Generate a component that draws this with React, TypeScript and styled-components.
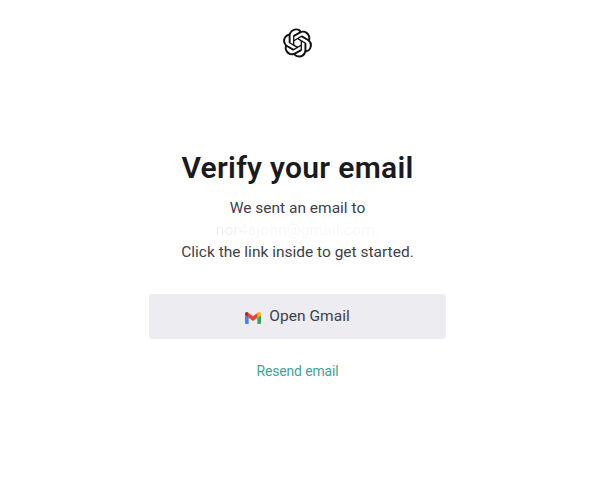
import React from "react";
import styled, { createGlobalStyle } from "styled-components";
import { SiOpenai } from "react-icons/si";

const GlobalStyle = createGlobalStyle`
  body { margin: 0; background: #fff; font-family: Roboto, "Liberation Sans", sans-serif; }
`;

const Page = styled.main`
  box-sizing: border-box;
  width: 595px;
  height: 496px;
  padding-top: 28px;
  display: flex;
  flex-direction: column;
  align-items: center;
`;

const Logo = styled(SiOpenai)`
  display: block;
  width: 29px;
  height: 30px;
  color: #111;
`;

const Title = styled.h1`
  margin: 90px 0 0;
  font-size: 30px;
  line-height: 40px;
  font-weight: 600;
  letter-spacing: 0.3px;
  color: #1b1b1f;
  white-space: nowrap;
`;

const Message = styled.div`
  margin-top: 9px;
  display: flex;
  flex-direction: column;
  align-items: center;
  font-size: 15.5px;
  line-height: 22px;
  color: #3f4149;
  white-space: nowrap;
`;

const Line = styled.span<{ $spacing: number }>`
  letter-spacing: ${(p) => p.$spacing}px;
`;

const Address = styled(Line)`
  color: transparent;
  background: linear-gradient(90deg, #ededf0 0, #f2f2f4 22px, #f8f8f9 26px, #f8f8f9 100%);
  background-clip: text;
  -webkit-background-clip: text;
`;

const MailButton = styled.button`
  margin: 31px 0 0;
  padding: 0;
  width: 297px;
  height: 45px;
  border: 0;
  border-radius: 3px;
  background: #ececf1;
  color: #3f4149;
  display: flex;
  align-items: center;
  justify-content: center;
  gap: 8px;
  font: 400 15.5px/22px Roboto, "Liberation Sans", sans-serif;
  letter-spacing: 0.05px;
`;

const ButtonLabel = styled.span`
  padding-bottom: 1px;
`;

const MailMark = styled.svg`
  display: block;
  width: 16px;
  height: 12px;
  margin-top: 3px;
`;

const Resend = styled.a`
  margin-top: 22px;
  font-size: 14px;
  line-height: 21px;
  letter-spacing: -0.15px;
  color: #4a9f93;
`;

function GmailIcon() {
  return (
    <MailMark viewBox="52 42 88 66" aria-hidden="true">
      <path fill="#4285f4" d="M58 108h14V74L52 59v43c0 3.32 2.69 6 6 6" />
      <path fill="#34a853" d="M120 108h14c3.32 0 6-2.69 6-6V59l-20 15" />
      <path fill="#fbbc04" d="M120 48v26l20-15v-8c0-7.42-8.47-11.65-14.4-7.2" />
      <path fill="#ea4335" d="M72 74V48l24 18 24-18v26L96 92" />
      <path fill="#c5221f" d="M52 51v8l20 15V48l-5.6-4.2C60.46 39.35 52 43.58 52 51" />
    </MailMark>
  );
}

export default function App() {
  return (
    <>
      <GlobalStyle />
      <Page>
        <Logo />
        <Title>Verify your email</Title>
        <Message>
          <Line $spacing={0}>We sent an email to</Line>
          <Address $spacing={0.15}>nor4ajohn@gmail.com.</Address>
          <Line $spacing={0}>Click the link inside to get started.</Line>
        </Message>
        <MailButton type="button">
          <GmailIcon />
          <ButtonLabel>Open Gmail</ButtonLabel>
        </MailButton>
        <Resend>Resend email</Resend>
      </Page>
    </>
  );
}
